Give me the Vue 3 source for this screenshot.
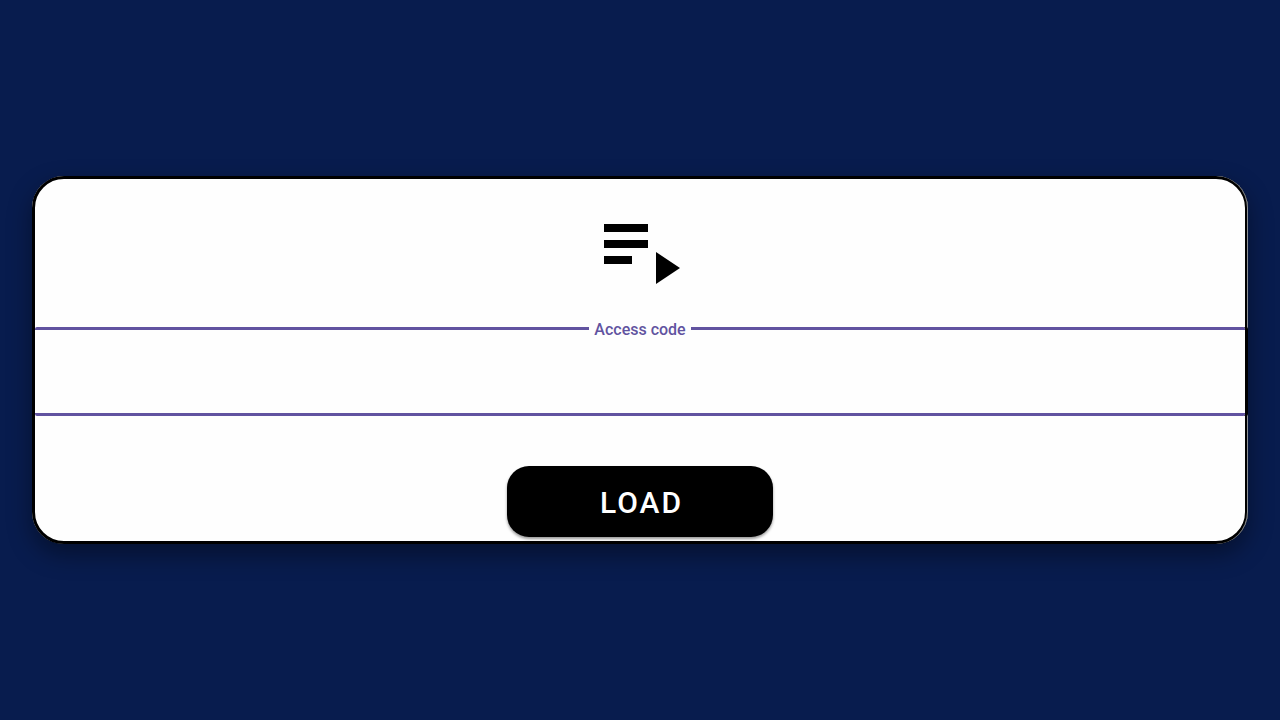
<script setup>
import { ref } from 'vue'

const code = ref('')
</script>

<template>
  <main class="screen">
    <form class="card" @submit.prevent>
      <svg class="icon" viewBox="0 0 24 24" aria-hidden="true">
        <path d="M3 10h11v2H3zM3 6h11v2H3zM3 14h7v2H3zM16 13v8l6-4z" />
      </svg>
      <fieldset class="field">
        <legend class="legend"><label for="access-code">Access code</label></legend>
        <input id="access-code" v-model="code" class="input" type="text" autocomplete="off" />
      </fieldset>
      <button class="load" type="submit">LOAD</button>
    </form>
  </main>
</template>

<style>
body {
  margin: 0;
  background: #081c4e;
}
</style>

<style scoped>
.screen {
  box-sizing: border-box;
  min-height: 100vh;
  padding: 32px;
  display: flex;
  align-items: center;
  isolation: isolate;
  font-family: Roboto, sans-serif;
}

.card {
  position: relative;
  flex: 1;
  display: flex;
  flex-direction: column;
  align-items: center;
  padding: 21px 0 4px;
  border: 3px solid #000;
  border-radius: 32px;
  background: #fefefe;
  box-shadow: 0 10px 24px rgba(0, 0, 0, 0.4);
}

/* Light rim behind the rounded corners */
.card::before {
  content: '';
  position: absolute;
  z-index: -1;
  inset: -3px;
  border-radius: 32px;
  background: #fff;
}

/* Thin highlight along the right edge */
.card::after {
  content: '';
  position: absolute;
  inset: -3px;
  border: 0 solid #8b8f94;
  border-right-width: 1px;
  border-radius: 32px;
  pointer-events: none;
}

.icon {
  width: 96px;
  height: 96px;
  fill: #000;
}

.field {
  position: relative;
  z-index: 1;
  box-sizing: border-box;
  align-self: stretch;
  min-width: 0;
  margin: 22px 0 0;
  padding: 0;
  border: 0 solid #6153a0;
  border-width: 3px 0;
  border-radius: 2px;
  box-shadow: 3px 0 #000;
}

.legend {
  margin: 0 auto;
  padding: 2px 5px 0;
  color: #6153a0;
  font-size: 16px;
  font-weight: 500;
  line-height: 19px;
}

.input {
  display: block;
  box-sizing: border-box;
  width: 100%;
  height: 74px;
  padding: 0 16px;
  border: 0;
  outline: 0;
  background: transparent;
  color: #000;
  font: 24px Roboto, sans-serif;
  text-align: center;
}

.load {
  width: 266px;
  height: 71px;
  margin: 50px 0 0;
  padding: 2px 0 0 3px;
  border: 0;
  border-radius: 22px;
  background: #000;
  box-shadow: 0 2px 3px rgba(0, 0, 0, 0.4);
  color: #fff;
  font: 500 30px Roboto, sans-serif;
  letter-spacing: 2px;
}
</style>
